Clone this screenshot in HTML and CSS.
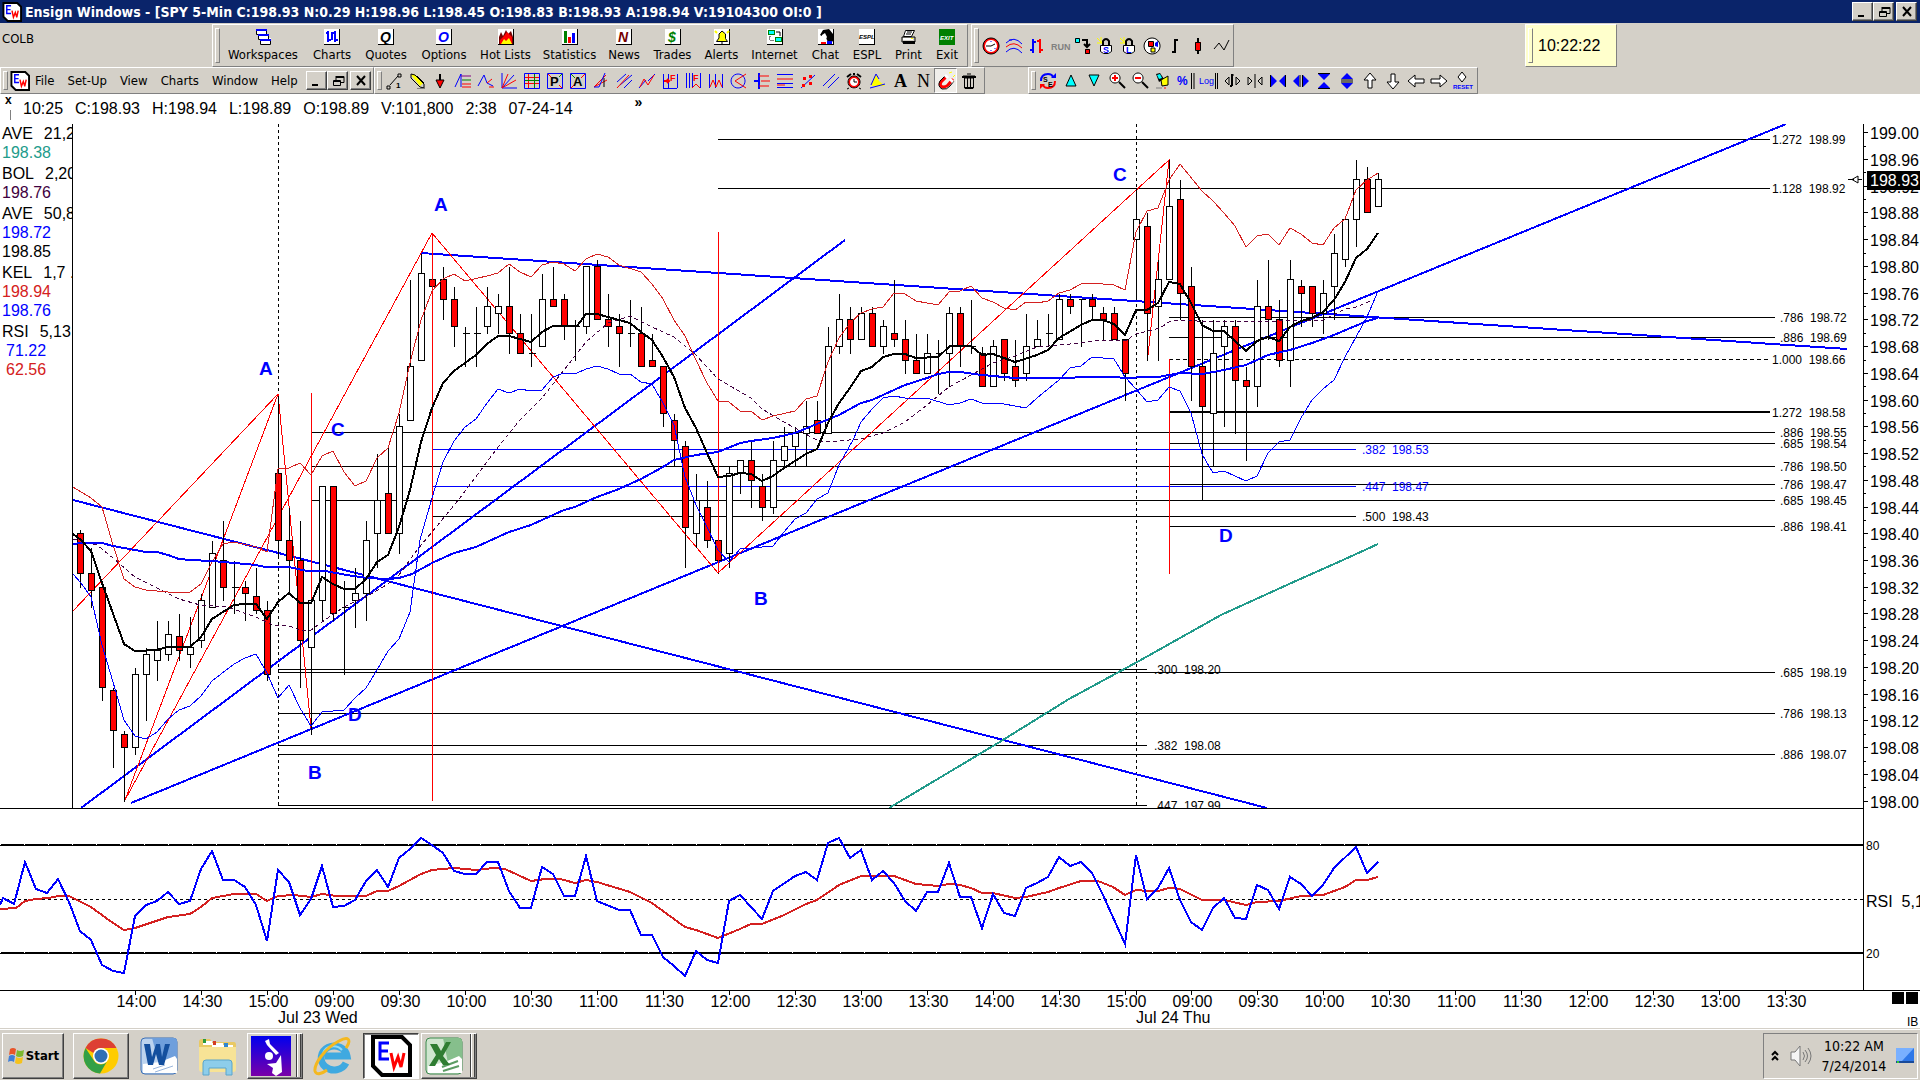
FILE: index.html
```html
<!DOCTYPE html>
<html lang="en">
<head>
<meta charset="utf-8">
<meta name="viewport" content="width=device-width, initial-scale=1">
<title>Ensign Windows</title>
<link rel="stylesheet" href="styles.css">
</head>
<body>
<header class="titlebar">
  <span class="ew ew-small" data-logo></span>
  <h1 class="title">Ensign Windows - [SPY 5-Min C:198.93 N:0.29 H:198.96 L:198.45 O:198.83 B:198.93 A:198.94 V:19104300 OI:0 ]</h1>
  <div class="winbtns">
    <button class="winbtn" aria-label="Minimize" data-icon="min"></button>
    <button class="winbtn" aria-label="Restore" data-icon="restore"></button>
    <button class="winbtn winbtn-close" aria-label="Close" data-icon="close"></button>
  </div>
</header>

<div class="rebar">
  <div class="bar-row bar-row-main">
    <span class="symbol">COLB</span>
    <nav class="band band-main" aria-label="Main toolbar">
      <button class="tool"><i data-icon="workspaces"></i>Workspaces</button>
      <button class="tool"><i data-icon="charts"></i>Charts</button>
      <button class="tool"><i data-icon="quotes"></i>Quotes</button>
      <button class="tool"><i data-icon="options"></i>Options</button>
      <button class="tool"><i data-icon="hot"></i>Hot Lists</button>
      <button class="tool"><i data-icon="stats"></i>Statistics</button>
      <button class="tool"><i data-icon="news"></i>News</button>
      <button class="tool"><i data-icon="trades"></i>Trades</button>
      <button class="tool"><i data-icon="alerts"></i>Alerts</button>
      <button class="tool"><i data-icon="internet"></i>Internet</button>
      <button class="tool"><i data-icon="chat"></i>Chat</button>
      <button class="tool"><i data-icon="espl"></i>ESPL</button>
      <button class="tool"><i data-icon="print"></i>Print</button>
      <button class="tool"><i data-icon="exit"></i>Exit</button>
    </nav>
    <div class="band band-icons band-studies" data-tools="clock curves bars run swap lockS lockL film ohlc candle line"></div>
    <div class="band band-clock">10:22:22</div>
  </div>
  <div class="bar-row bar-row-menu">
    <nav class="band band-menu" aria-label="Menu">
      <span class="ew ew-small" data-logo></span>
      <a class="menu" href="#">File</a>
      <a class="menu" href="#">Set-Up</a>
      <a class="menu" href="#">View</a>
      <a class="menu" href="#">Charts</a>
      <a class="menu" href="#">Window</a>
      <a class="menu" href="#">Help</a>
      <span class="winbtns mdi">
        <button class="winbtn" aria-label="Minimize chart" data-icon="min"></button>
        <button class="winbtn" aria-label="Restore chart" data-icon="restore"></button>
        <button class="winbtn winbtn-close" aria-label="Close chart" data-icon="close"></button>
      </span>
    </nav>
    <div class="band band-icons" data-tools="segment pencil arrow levels zig fan grid boxP boxA angle pitch zag gann gann2 cycle circle sidebars hlines dots parallel alarm mountain textA textN magnet trash"></div>
    <div class="band band-icons band-view" data-tools="refresh up down zoomin zoomout brush percent log widen narrow hin hout vin vout aup adown aleft aright reset"></div>
  </div>
</div>

<main>
  <div class="quote">
    <span class="quote-grip">x</span>
    <span>10:25</span><span>C:198.93</span><span>H:198.94</span><span>L:198.89</span><span>O:198.89</span><span>V:101,800</span><span>2:38</span><span>07-24-14</span>
    <span class="more">»</span>
  </div>
  <div class="price">
    <aside class="studies">
      <dl><dt><b>AVE</b><b>21,21</b></dt><dd class="teal">198.38</dd></dl>
      <dl><dt><b>BOL</b><b>2,20</b></dt><dd class="plum">198.76</dd></dl>
      <dl><dt><b>AVE</b><b>50,8</b></dt><dd class="blue">198.72</dd><dd>198.85</dd></dl>
      <dl><dt><b>KEL</b><b>1,7 .5</b></dt><dd class="red">198.94</dd><dd class="blue">198.76</dd></dl>
      <dl><dt><b>RSI</b><b>5,13</b></dt><dd class="blue in">71.22</dd><dd class="red in">62.56</dd></dl>
    </aside>
    <svg id="price" viewBox="72 124 1848 685" role="img" aria-label="SPY 5 minute price chart"></svg>
  </div>
  <svg id="rsi" viewBox="0 809 1920 219" role="img" aria-label="RSI study and time axis"></svg>
</main>

<footer class="taskbar">
  <button class="start">
    <svg viewBox="0 0 19 19" width="19" height="19"><path fill="#e8552a" d="M3 3q3-2 6 0l-1 6q-3-2-6 0z"/><path fill="#7cb82f" d="M10 4q3 2 7 0l-1 6q-4 2-7 0z"/><path fill="#3f7fd8" d="M2 10q3-2 6 0l-1 6q-3-2-6 0z"/><path fill="#f5c21c" d="M9 11q3 2 7 0l-1 6q-4 2-7 0z"/></svg>Start</button>
  <button class="task raised" aria-label="Chrome">
    <svg viewBox="0 0 36 36" width="36" height="36"><circle cx="18" cy="18" r="17.500" fill="#fc0"/><path fill="#dd4033" d="M2.500 10A17.500 17.500 0 0 1 33.500 10H18a8 8 0 0 0-7.500 5z"/><path fill="#33a046" d="M2.500 10A17.500 17.500 0 0 0 17 35.500L24.500 22.500a8 8 0 0 1-14 -.5z"/><circle cx="18" cy="18" r="8" fill="#fff"/><circle cx="18" cy="18" r="6.500" fill="#2f6fb5"/></svg>
  </button>
  <button class="task" aria-label="Word">
    <svg viewBox="0 0 38 38" width="38" height="38"><rect x="1" y="1" width="36" height="36" rx="4" fill="#bcd3ee" stroke="#3b6fb5"/><path fill="#6f9fdc" d="M12 1h22q3 0 3 3v20L20 30z"/><path fill="#fff" d="M3 36V27L20 25l15-6 2 3v14z"/><path stroke="#9ab6dc" d="M13 32l12-4M15 35l18-6"/><path fill="#134f9e" d="M4 7h6l2 13 4-13h4l2 13 3-13h5l-6 21h-5l-3-11-3 11H8z"/></svg>
  </button>
  <button class="task" aria-label="Explorer">
    <svg viewBox="0 0 40 40" width="40" height="40"><path fill="#e9c964" d="M2 6q0-3 3-3h8l2 3h22q2 0 2 3v24H2z"/><path fill="#fff" d="M6 5h9v4H6zM15 7h11v4H15zM26 9h10v3H26z"/><path fill="#2b9a3e" d="M6 3h3v4H6z"/><path fill="#d43c24" d="M16 5h3v4h-3z"/><path fill="#2f86d0" d="M27 7h4v4h-4z"/><path fill="#f7e396" d="M2 11h37v22q0 3-3 3H5q-3 0-3-3z"/><path fill="#8dcdea" stroke="#5aa5cc" d="M6 39V27q0-3 3-3h23q3 0 3 3v12h-6v-7H12v7z"/></svg>
  </button>
  <button class="task raised stack" aria-label="Paint Shop">
    <svg viewBox="0 0 40 40" width="40" height="40"><defs><linearGradient id="vio" x2="0" y2="1"><stop offset="0" stop-color="#00e"/><stop offset="1" stop-color="#7a00a8"/></linearGradient></defs><path fill="url(#vio)" d="M0 0h40v40H0z"/><g fill="#fff"><path d="M14 5l4-2 1 5 9 9-3 2-9-10z"/><circle cx="18" cy="20" r="4"/><path d="M16 28l9-1 5-8 1 17-6 4-4-3 1-5z"/></g></svg>
  </button>
  <button class="task" aria-label="Internet Explorer">
    <svg viewBox="0 0 40 40" width="40" height="40"><path fill="none" stroke="#3fa9e0" stroke-width="7" d="M33 27a13 12 0 1 1 1-7H12"/><path fill="none" stroke="#8fdcf8" stroke-width="2" d="M10 17a11 10 0 0 1 19-3"/><path fill="none" stroke="#f4b81f" stroke-width="3" d="M33 12c6-9 2-12-7-7C12 12 1 28 2 35c1 5 8 2 12-1"/></svg>
  </button>
  <button class="task pressed" aria-label="Ensign Windows"><span class="ew ew-big" data-logo></span></button>
  <button class="task raised stack" aria-label="Excel">
    <svg viewBox="0 0 38 38" width="38" height="38"><rect x="1" y="1" width="36" height="36" rx="4" fill="#cfe6cf" stroke="#3c8a4e"/><path fill="#86bf8c" d="M18 1h16q3 0 3 3v18l-14 4z"/><path fill="#fff" d="M3 36V29l17-4 14-6 3 3v14z"/><path stroke="#5b9c63" stroke-width="2" d="M17 30l16-6M18 34l16-5"/><path fill="#2f7d32" d="M5 7h7l4 7 5-9h5L18 19l7 9h-7l-4-6-4 7H4l7-11z"/></svg>
  </button>
  <div class="tray">
    <svg viewBox="0 0 10 12" width="10" height="12" fill="none" stroke="#000" stroke-width="2"><path d="M2 5l3-3 3 3M2 10l3-3 3 3"/></svg>
    <svg viewBox="0 0 22 22" width="22" height="22" fill="none" stroke="#777"><path fill="#f4f4f4" d="M1 7h4l5-6v20l-5-6H1z"/><path d="M13 7q3 4 0 8M15 5q5 6 0 12M18 3q6 8 0 16"/></svg>
    <div class="clock"><span>10:22 AM</span><span>7/24/2014</span></div>
    <svg viewBox="0 0 18 16" width="18" height="16"><path fill="#2f78e8" d="M0 0h18v13H0z"/><path fill="#79b0ff" d="M0 0h18L6 13H0z"/><path fill="#184a9a" d="M0 13h18v2H0z"/><path fill="#3c3" d="M1 13h2v2H1z"/></svg>
  </div>
</footer>
<script src="script.js"></script>
</body>
</html>
```

FILE: styles.css
```css
* { box-sizing: border-box; }
body {
  margin: 0;
  background: #fff;
  color: #000;
  font: 13px/16px "DejaVu Sans Condensed", "DejaVu Sans", sans-serif;
}
button { font: inherit; color: inherit; border: 0; padding: 0; background: none; }
svg { display: block; }
i { display: block; }

/* Title bar */
.titlebar {
  display: flex;
  align-items: center;
  height: 23px;
  padding: 0 3px 0 2px;
  gap: 3px;
  background: #0a246a;
  color: #fff;
}
.title { flex: 1; margin: 0; font-size: 14px; font-weight: 700; white-space: nowrap; overflow: hidden; }
.winbtns { display: flex; }
.winbtn {
  width: 21px;
  height: 19px;
  display: grid;
  place-items: center;
  background: #d4d0c8;
  border: 1px solid;
  border-color: #fff #404040 #404040 #fff;
  box-shadow: inset -1px -1px #808080;
}
.winbtn-close { margin-left: 2px; }
.ew { display: block; flex: none; }
.ew svg { width: 100%; height: 100%; }
.ew-small { width: 20px; height: 20px; }
.ew-big { width: 42px; height: 42px; }

/* Docked toolbars */
.rebar { background: #d4d0c8; padding-top: 1px; height: 71px; overflow: hidden; }
.bar-row { display: flex; }
.bar-row-main { height: 43px; }
.bar-row-menu { height: 27px; }
.symbol { width: 212px; padding: 7px 0 0 2px; }
.band {
  display: flex;
  align-items: center;
  border: 1px solid;
  border-color: #fff #808080 #808080 #fff;
}
.band::before {
  content: "";
  align-self: stretch;
  flex: none;
  width: 3px;
  margin: 3px 2px;
  border: 1px solid;
  border-color: #fff #808080 #808080 #fff;
}
.band-main {
  display: grid;
  grid-template-columns: 7px 86px 52px 56px 60px 63px 65px 44px 53px 45px 61px 41px 42px 41px 36px;
  width: 756px;
}
.tool { display: flex; flex-direction: column; align-items: center; gap: 1px; padding-bottom: 1px; white-space: nowrap; }
.tool svg, .icon svg { overflow: visible; }
.band-icons { padding-right: 4px; }
.band-icons::before { margin-right: 0; }
.icon { flex: none; width: 23px; height: 25px; display: grid; place-items: center; }
.icon-on { background: #f0eeea; border: 1px solid; border-color: #808080 #fff #fff #808080; }
.band-studies { margin-left: 3px; width: 263px; }
.band-clock { margin-left: 291px; width: 92px; background: #ffffcc; font: 16px/20px "Liberation Sans", sans-serif; gap: 3px; }
.band-menu { width: 374px; }
.band-menu .menu { color: inherit; text-decoration: none; margin-left: 13px; }
.band-menu .ew + .menu { margin-left: 5px; }
.mdi { margin-left: auto; padding-right: 2px; }
.band-view { margin-left: 43px; }

/* Quote line above the chart */
.quote {
  display: flex;
  gap: 12px;
  height: 30px;
  padding-left: 5px;
  font: 16px/30px "Liberation Sans", sans-serif;
  white-space: nowrap;
}
.quote-grip {
  width: 6px;
  height: 26px;
  border-right: 1px solid #808080;
  border-image: linear-gradient(#fff 60%, #808080 60%) 1;
  font-size: 12px;
  line-height: 12px;
  font-weight: 700;
}
.more { margin-left: 50px; font: 700 14px/16px "Liberation Sans", sans-serif; }

/* Price pane */
.price { display: grid; grid-template-columns: 72px 1fr; }
.studies { border-bottom: 1px solid #000; overflow: hidden; padding-left: 2px; font: 16px/19px "Liberation Sans", sans-serif; }
.studies dl, .studies dd { margin: 0; }
.studies dl { margin-bottom: 2px; }
.studies dt { display: flex; gap: 11px; white-space: nowrap; }
.studies b { font-weight: 400; }
.in { padding-left: 4px; }
.teal { color: #229b8b; }
.plum { color: #400040; }
.blue { color: #00f; }
.red { color: #d42020; }

#price, #rsi { width: 100%; height: auto; font: 16px "Liberation Sans", sans-serif; }
.lines { fill: none; stroke: #000; shape-rendering: crispEdges; }
.small { font-size: 12px; }
.wave { font-size: 19px; font-weight: 700; fill: #00f; }

/* Task bar */
.taskbar {
  display: flex;
  align-items: center;
  gap: 2px;
  height: 52px;
  padding: 2px 2px 0;
  background: #d4d0c8;
  border-top: 1px solid #d4d0c8;
  box-shadow: inset 0 1px #fff;
}
.start, .raised {
  border: 1px solid;
  border-color: #fff #404040 #404040 #fff;
  box-shadow: inset -1px -1px #808080;
}
.start { display: flex; align-items: center; justify-content: center; width: 62px; height: 46px; margin-right: 7px; font-weight: 700; }
.task { display: grid; place-items: center; width: 56px; height: 46px; }
.stack { background: linear-gradient(90deg, transparent 48px, #404040 48px 49px, #fff 49px 50px, #d4d0c8 50px 52px, #404040 52px 53px, #fff 53px 54px); place-items: center start; padding-left: 3px; }
.pressed { background: #fff; border: 1px solid; border-color: #404040 #fff #fff #404040; box-shadow: inset 1px 1px #808080; }
.tray {
  display: flex;
  align-items: center;
  justify-content: space-between;
  width: 155px;
  height: 46px;
  margin-left: auto;
  padding: 0 3px 0 6px;
  border: 1px solid;
  border-color: #808080 #fff #fff #808080;
}
.clock { display: grid; gap: 4px; text-align: center; font-size: 14px; }
```

FILE: script.js
```javascript
const COLORS = { k: '#000', b: '#00f', r: '#f00', g: '#008000', y: '#ff0', w: '#fff', c: '#0ff', p: '#800080', n: '#808080', m: '#700' };

/* Icon notation, 18x18 grid: lower-case key strokes a path, upper-case key fills it,
   "#key x y size text" writes bold text. Parts are separated by ";". */
const page = 'W:M1 1h15v15H1z;k:M16.5 1v16M1 16.500h16;';
const ICONS = {
  min: 'K:M4 12h6v2H4z', restore: 'k:M7 4.500h8v6h-3M7 5.500h8M7 4v4;k:M4.500 8.500h7v5h-7zM4 9.500h8', close: 'k2:M5 4l8 9M13 4l-8 9',
  workspaces: 'W:M2 1h11v6H2zM4 6h11v6H4zM6 10h11v7H6z;k:M2.500 1.500h10v5h-10zM4.500 6.500h10v5h-10zM6.500 11.500h10v5h-10z;b2:M2 2h11M4 7h11M6 12h11',
  charts: page + 'b2:M5 3v11M5 5H3M5 12h3M9 4v8M12 3v11M9 5h3M12 12h3', quotes: page + '#k 3 14 14 Q', options: page + '#b 3 14 14 O',
  hot: page + 'M:M2 16V9l2-5 2 4 3-6 2 4 3-3 2 6v7z;R:M3 16v-4l4-4 3-4 5 5v7z;Y:M4 16l3-5 2 2 3-3 3 6z',
  stats: page + 'G:M3 3h3v12H3z;R:M7 9h3v6H7z;B:M11 5h3v10h-3z', news: page + '#m 3 14 14 N', trades: page + '#g 4 14 14 $',
  alerts: page + 'Y:M4 13l2-3V6l3-3 3 3v4l2 3z;k:M3.500 13.500h11l-2-3V6L9 3 6 6v4zM9 14v2;y2:M2 3l2 2M16 3l-2 2',
  internet: page + 'G:M2 2h7v5H2zM9 9h7v5H9z;C:M3 3h5v3H3zM10 10h5v3h-5z;k:M10 4h4v4M4 8v4h4;W:M4 9h4v3H4z',
  chat: page + 'K:M3 7l3-5 6-1 4 5v7l-4 3-3-6z;W:M5 7l3-2 2 4-2 4-3-1z;R:M4 14h5v2H4z;B:M10 13h5v3h-5z',
  espl: page + '#k 1 11 6 ESPL', print: 'W:M5 2h9l-2 6H3z;k:M5.500 2.500h9l-3 6h-8zM2 9h13v5H2zM7 4h5M6 6h5;K:M3 13h12v3H3z;W:M3 10h10v2H3z;Y:M11 10h2v1h-2z',
  exit: 'G:M1 1h16v16H1z;#w 2 12 6 EXIT',
  clock: 'W:M9 1a8 8 0 1 0 .1 0z;r2:M9 2a7 7 0 1 0 .1 0z;k:M9 1a8 8 0 1 0 .1 0zM9 9l4-2M4 9h5;b:M9 4v1M9 13v1M13 11v1',
  curves: 'b:M1 6Q9-2 17 7;r:M1 10q8-7 16 1;b:M1 15q8-8 16 1M4 3h3', bars: 'b2:M5 2v14M2 13h3M5 5h3;r2:M12 2v14M9 4h3M12 13h3', run: '#n 0 13 9 RUN',
  swap: 'C:M1 1h5v5H1z;k:M1.500 1.500h4v4h-4z;k2:M8 3h5v6M10 7l3 3 3-3;R:M11 12h5v5h-5z;k:M11.500 12.500h4v4h-4z',
  lockS: 'k2:M6 8V4q3-4 6 0v4;W:M3 8h12v6l-3 3H6l-3-3z;k:M3.500 8.500h11v6l-3 2h-5l-3-2z;#b 6 16 9 S;y:M0 1l5 5M4 0v6M0 6h5',
  lockL: 'k2:M6 8V4q3-4 6 0v4;W:M3 8h12v6l-3 3H6l-3-3z;k:M3.500 8.500h11v6l-3 2h-5l-3-2z;#b 6 16 9 L;y:M0 1l5 5M4 0v6M0 6h5',
  film: 'W:M9 1a8 8 0 1 0 .1 0z;k:M9 1a8 8 0 1 0 .1 0z;R:M5 4h5v5H5z;B:M12 6l3-2v6l-3-1z;Y:M8 11h4v4H8z;k:M5.500 4.500h5v5h-5zM8 11h4v4H8z',
  ohlc: 'k2:M9 2v14M9 3h3M6 15h3', candle: 'R:M6 5h6v8H6z;k:M6.500 5.500h5v8h-5z;k2:M9 1v4M9 14v3', line: 'k:M2 12l5-6 5 7 5-10',
  segment: 'k:M2 14h3v3H2zM5 13L13 4M13 2h3v3h-3z;#k 11 16 8 1', pencil: 'Y:M3 3l3-1 9 9-3 3z;k:M3 6V2l4 1 9 9v4l-4-1z;k:M3 6l9 9M9 4l7 7;N:M9 16h8v1H9z', arrow: 'k2:M9 2v6;R:M5 8h8l-4 8z;k:M5 8h8l-4 8z',
  levels: 'b:M1 15L7 2M7 2v13;p:M7 4h10;g:M8 8h9;r:M8 12h9M8 15h9', zig: 'b:M1 14L7 3l3 8 6 3;r:M10 11l5-4M12 15h5', fan: 'b:M2 1v15h15M2 16L14 3;r:M2 16L8 2M2 16l14-8',
  grid: 'r:M5.500 2v14M2 5.500h14M2 11.500h14;g:M11.500 2v14M2 8.500h14;b:M1.500 1.500h15v15h-15z', boxP: 'b:M1.500 1.500h15v15h-15z;r:M2 2l3 3M16 16l-3-3;g:M16 2l-3 3;#k 4 14 13 P', boxA: 'b:M1.500 1.500h15v15h-15z;r:M2 16l4-4M16 2l-4 4;g:M2 2l4 4;#k 4 14 13 A',
  angle: 'r:M2 15L14 3M2 15l13-7;b:M13 1L7 15H2;k:M12 15V6', pitch: 'b:M2 10l9-8M5 13l12-10M9 16l8-8;r:M2 16L14 3', zag: 'b:M1 16l7-8M10 9l7-7;r:M2 15l4-8 4 6 6-10', gann: 'b:M2.500 2v14M7.500 2v14M16.500 2v14M2 16.500h14;r2:M3 9h5M6 7l2 2-2 2;#r 9 9 9 F',
  gann2: 'b:M2.500 1v15M5.500 1v15M8.500 1v15M16.500 1v15;r:M8 16l4-4 4 4;#r 9 9 9 F', cycle: 'b:M2.500 2v14M8.500 2v14M15.500 2v14;r:M3 15l3-7 3 7 3-7 3 7', circle: 'b:M8 2a7 7 0 1 0 .1 0z;r:M16 2L5 9l11 7', sidebars: 'b2:M6 1v16M1 9h5;r:M6 4h10M6 14h10M8 9h9',
  hlines: 'b:M1 2.500h16M1 11.500h16;r:M1 7h16;b:M1 15.500h16;r:M1 13h8', dots: 'b:M2 16L16 3;R:M4 5h3v3H4zM10 3h3v3h-3zM3 12h3v3H3zM10 10h3v3h-3z', parallel: 'b:M1 14L13 2M6 16L17 5',
  alarm: 'W:M9 5a6 6 0 1 0 .1 0z;r2:M9 5a5 5 0 1 0 .1 0z;k:M9 4a6 6 0 1 0 .1 0zM9 10V7M9 10h3M4 16l-2 1M14 16l2 1;k2:M2 5l4-3M16 5l-4-3M8 2h2', mountain: 'Y:M3 13L8 2l3 7 6 5H5z;b:M3 13L8 2l3 5M2 16l15-4', textA: '#s 3 15 18 A', textN: '#u 3 15 18 N',
  magnet: 'r3:M10 4l-6 6q-2 4 2 5 3 0 5-2l5-6;k:M8 4l-5 5q-3 5 2 8 5 1 8-3l4-5;W:M9 2l3 3-2 2-3-3zM14 6l3 3-2 2-3-3z;y:M12 1l3-1M16 5l2-2', trash: 'k:M3 4h12M7 2h4M4.500 6v10h9V6zM7.500 6v10M10.500 6v10;k2:M2 5h14M5 16h8',
  refresh: 'b2:M2 9q0-7 7-7 4 0 5 3;r2:M16 9q0 7-7 7-4 0-5-3;B:M12 6h5V1z;R:M6 12H1v5z;#k 4 10 7 S;#k 9 15 7 E', up: 'C:M9 3l5 11H4z;k:M9 3l5 11H4z', down: 'C:M4 3h10L9 14z;k:M4 3h10L9 14z',
  zoomin: 'W:M7 1a5 5 0 1 0 .1 0z;k:M7 1a5 5 0 1 0 .1 0z;r2:M7 3v6M4 6h6;k2:M11 10l6 6', zoomout: 'W:M7 1a5 5 0 1 0 .1 0z;k:M7 1a5 5 0 1 0 .1 0z;r2:M4 6h6;k2:M11 10l6 6', brush: 'K:M2 2l4-1 4 6-5 3z;C:M3 3l3-1 2 4-3 1z;Y:M7 8l7-4v9l-6 1z;k:M7 8l7-4v9l-6 1z;r:M11 15v2;n:M2 16h6',
  percent: '#b 0 13 12 %;k:M14.500 1v16M17 1v16', log: '#b -1 12 9 Log;k:M15.500 1v16M17.500 1v16', widen: 'k2:M9 2v12M9 14H7;k:M11 3h-2M6 5L2 9l4 4zM13 5l4 4-4 4z', narrow: 'k:M9 2v14M2 5l4 4-4 4zM16 5l-4 4 4 4z',
  hin: 'B:M2 3l6 6-6 6zM16 3l-6 6 6 6z;k:M1.500 3v12M16.500 3v12', hout: 'B:M7 3L1 9l6 6zM11 3l6 6-6 6z;k:M8 3v12M10.500 3v12', vin: 'B:M3 2h12L9 8zM3 16h12l-6-6z;k:M3 1.500h12M3 16.500h12', vout: 'B:M3 7h12L9 1zM3 11h12l-6 6z;k:M3 8h12M3 10h12',
  aup: 'W:M9 1l6 7h-4v8H7V8H3z;k:M9 1l6 7h-4v8H7V8H3z', adown: 'W:M9 17l6-7h-4V2H7v8H3z;k:M9 17l6-7h-4V2H7v8H3z', aleft: 'W:M1 9l7-6v4h9v4H8v4z;k:M1 9l7-6v4h9v4H8v4z', aright: 'W:M17 9l-7-6v4H1v4h9v4z;k:M17 9l-7-6v4H1v4h9v4z',
  reset: 'W:M9 0l4 5-4 5-4-5z;k:M9 0l4 5-4 5-4-5z;#b 0 17 6 RESET'
};

function iconSvg(name) {
  const parts = ICONS[name].split(';').filter(Boolean).map(part => {
    if (part[0] === '#') {
      const [key, x, y, size, text] = part.slice(1).split(' ');
      const serif = key === 's' || key === 'u';
      return `<text x="${x}" y="${y}" font-size="${size}" font-weight="${key === 'u' || name === 'log' ? 400 : 700}" font-family="${serif ? 'Liberation Serif, serif' : 'Liberation Sans, sans-serif'}" fill="${COLORS[key] || '#000'}">${text}</text>`;
    }
    const [key, d] = part.split(':');
    const letter = key[0], color = COLORS[letter.toLowerCase()];
    return letter === letter.toUpperCase()
      ? `<path fill="${color}" d="${d}"/>`
      : `<path fill="none" stroke="${color}" stroke-width="${key[1] || 1}" d="${d}"/>`;
  });
  return `<svg viewBox="0 0 18 18" width="18" height="18">${parts.join('')}</svg>`;
}

document.querySelectorAll('[data-icon]').forEach(el => { el.innerHTML = iconSvg(el.dataset.icon); });
document.querySelectorAll('[data-tools]').forEach(el => {
  el.innerHTML = el.dataset.tools.split(' ').map(name =>
    `<button class="icon${name === 'magnet' ? ' icon-on' : ''}" aria-label="${name}">${iconSvg(name)}</button>`).join('');
});
document.querySelectorAll('[data-logo]').forEach(el => {
  el.innerHTML = '<svg viewBox="0 0 42 42"><path fill="#fff" stroke="#000" stroke-width="4" d="M3 2h29l8 8v30H12l-9-9z"/><path fill="none" stroke="#00f" stroke-width="3" d="M19 8H10v16h9M10 16h8"/><path fill="none" stroke="#f00" stroke-width="3" d="M21 18l3 14 4-10 3 10 3-14"/></svg>';
});

/* ---- Chart ---- */
const X0 = 80.5, STEP = 11;
const yOf = cents => Math.round(800.6 - cents * 6.683) + 0.5;

/* One candle per entry: direction, high, body top, body bottom, low, in cents above 198 */
const CANDLES = `r 40.6 40 34 32|r 38 34 31.500 29|r 32.300 32 17 15|r 17 16.500 10.500 5|r 10.600 10 8 0|w 20 19 8 7|w 23 22 19 12|w 27 22.600 21 18|w 27 25 22 21|r 28 24.600 22.500 21|w 27.600 23 22 20|w 31 30 24 23|w 39 37 29 29|r 42 36 32 30|w 36 32 32 28|r 33 32 31 27|r 35 30.600 28.500 28|r 30 28.500 19 18|r 60.700 49 39 36.300|r 44 39 36 31|r 42 36 24 17|w 30 30 23 10|w 47 47 30 27|r 47 47 28 27|w 33 29 29 19|w 35 31 30 26|w 42 39 31 27|w 52 45 40 35|r 53 46 40 40|w 58 56 40 37|w 78 65 57 57|w 82 79 66 66|r 85 78 77 77|r 80 78 75 72|r 77 75 71 68|w 71 70 70 65|w 74 70 70 65|w 77 74 71 70|w 76 74 73 70|r 80 74 70 67|r 73 70 67 67|w 73 67 67 65|w 79 75 68 68|r 80 75 74 74|r 76 75 71 69|w 72 71 71 66|w 80 80 71 70|r 81 80 72 72|r 76 72 71 68|r 73 71 70 65|w 75 70 70 68|r 74 70 65 65|r 70 66 65 65|r 65 65 58 56|r 58 57 54 50|r 54 53 41 35|w 49 45 40 38|r 48 44 39 38|r 50 39 36 34|w 50 49 37 35|w 51 51 49 46|r 54 51 48 44|r 49 47 44 42|w 54 51 44 43|w 56 53 51 50|w 56 55 53 50|w 60 56 55 50|r 60 57 55 55|w 71 68 55 55|w 76 72 68 67|r 74 72 69 67|w 74 73 69 69|r 74 73 68 68|w 72 71 68 67|r 78 70 69 68|r 72 69 66 64|r 70 66 64 64|w 70 67 64 64|w 69 67 67 61|w 74 73 67 62|r 74 73 68 65|w 75 68 68 67|r 68 67 62 62|w 69 68 62 62|r 69 69 64 63|r 69 65 63 62|w 73 68 64 63|w 72 69 68 68|w 73 70 70 68|w 76 75 69 69|r 76 75 74 73|w 75 75 75 68|r 76 75 74 72|r 74 73 72 69|r 74 73 69 69|r 69 69 64 60|w 91.600 87 84 75|r 88 86 73 66|w 81 78 74 66|w 96 89 78 78|r 93 90 76 72|r 80 77 65 60|r 72 65 59 45|w 72 67 58 50|w 72 71 68 56|r 72 71 63 55|r 65 63 62 51|w 78 74 62 59|r 81 74 72 69|r 75 72 66 65|w 81 78 66 62|r 78 77 76 71|r 77 77 73 71|w 78 76 73 70|w 85 82 77 72|w 87 87 81 80|w 96 93 87 83|r 95 93 88 88|w 94 93 89 89`.split('|').map(row => row.split(' '));

const AVE8 = '73,534 81,540 91,551 102,583 124,644 135,651 157,650 167,647 190,647 201,637 212,619 234,605 245,604 256,604 267,619 278,602 289,593 300,603 311,603 322,577 333,584 344,589 355,589 366,579 377,562 388,555 399,527 410,490 421,442 432,408 443,383 454,371 476,355 487,344 498,336 509,336 520,339 531,342 542,332 553,326 577,326 586,314 597,314 608,317 630,323 641,332 652,340 663,357 674,377 685,408 696,428 707,453 718,477 729,476 740,473 751,474 762,481 773,476 784,468 806,454 817,449 828,423 839,403 850,388 861,371 872,367 883,357 894,354 905,354 916,358 938,357 950,346 971,346 982,355 993,354 1004,358 1015,362 1037,355 1048,350 1059,338 1081,325 1092,320 1103,320 1114,324 1125,335 1136,310 1147,310 1158,303 1169,282 1180,284 1191,303 1202,325 1213,331 1224,331 1235,341 1246,351 1257,341 1268,337 1279,341 1290,327 1301,321 1312,318 1323,312 1334,300 1345,282 1356,258 1367,249 1378,233';
const AVE50 = '73,544 81,543 102,543 113,546 146,552 157,552 168,555 179,559 190,560 212,561 256,565 265,567 289,567 307,571 325,571 347,575 367,578 388,579 399,578 412,574 432,563 454,553 476,547 509,532 531,525 564,510 575,507 597,497 608,493 619,489 641,479 663,467 674,460 696,455 718,452 740,443 751,441 773,438 795,433 839,415 850,409 861,403 872,400 905,385 927,378 938,374 949,372 960,372 982,375 1015,378 1070,378 1081,377 1114,377 1125,378 1147,377 1158,377 1180,373 1202,374 1224,370 1246,365 1268,355 1290,350 1312,343 1334,335 1367,321 1378,318';
const KEL_TOP = '73,487 91,498 102,507 113,545 124,579 135,587 146,590 168,592 190,592 201,584 212,562 223,544 234,542 256,547 267,552 278,469 289,468 300,463 311,475 322,456 333,451 344,472 355,486 366,481 377,458 388,448 399,413 410,363 421,320 432,291 443,279 454,274 465,281 487,276 498,273 509,264 520,272 531,277 542,265 553,262 564,264 575,271 586,259 597,254 608,257 619,265 641,272 652,284 663,299 674,320 685,336 696,360 707,383 718,401 729,402 740,411 751,411 762,420 773,416 795,411 806,399 817,396 828,362 839,338 850,323 861,313 872,309 883,307 894,293 905,294 916,301 938,305 949,292 960,291 971,286 982,298 993,302 1004,308 1015,310 1026,302 1037,303 1048,301 1059,293 1070,290 1081,284 1092,283 1114,285 1125,290 1136,232 1147,211 1158,208 1169,180 1180,164 1202,191 1213,201 1224,213 1235,226 1246,247 1257,236 1268,234 1279,245 1290,228 1301,234 1312,243 1323,245 1334,228 1345,219 1356,190 1367,180 1378,173';
const KEL_LOW = '73,574 81,583 91,597 102,645 113,682 124,720 135,736 146,739 157,732 168,719 179,710 190,706 201,696 212,681 234,664 245,658 256,654 267,673 278,698 289,685 300,708 311,726 322,712 344,710 355,698 366,688 377,670 388,651 399,639 410,612 420,540 432,498 443,462 454,441 465,427 476,419 487,403 498,389 509,393 520,389 531,391 542,390 553,377 564,373 575,374 586,369 597,366 608,369 619,374 630,374 641,382 652,384 663,403 674,425 685,477 696,505 707,527 718,550 729,562 740,549 751,548 773,546 784,532 795,519 806,513 817,499 828,493 839,465 853,440 861,422 872,409 883,398 894,396 905,398 927,398 949,405 960,403 971,399 982,403 1004,404 1026,408 1037,398 1059,380 1070,368 1081,366 1092,357 1114,359 1125,377 1136,389 1147,402 1158,400 1169,387 1180,391 1191,413 1202,454 1213,473 1224,471 1246,481 1257,476 1268,453 1279,442 1290,440 1301,418 1312,400 1323,389 1334,380 1345,357 1356,337 1367,317 1378,291';
const BOL = '73,539 97,545 113,558 135,577 157,588 179,599 200,605 227,607 256,617 273,625 289,626 300,630 311,630 322,622 344,607 373,593 388,584 399,575 417,550 432,532 460,498 478,474 498,447 520,420 542,398 564,370 586,342 608,323 630,316 652,327 674,337 696,355 718,379 751,398 762,409 784,422 795,428 820,442 839,441 860,439 883,433 905,422 927,405 949,387 971,375 993,363 1015,356 1037,347 1070,344 1103,340 1125,341 1136,334 1160,328 1169,322 1180,320 1213,322 1279,321 1323,320 1345,309 1356,307 1373,300';
const AVE200 = '889,808 998,743 1069,699 1139,661 1221,615 1298,580 1343,560 1378,544';
const RSI = '0,905 3,898 14,904 25,862 36,889 47,893 58,879 69,902 80,931 91,940 102,965 113,971 124,973 135,916 146,905 157,901 168,892 179,904 190,901 201,869 212,851 223,880 234,880 245,887 256,905 267,941 278,870 289,882 300,915 311,899 322,866 333,907 344,906 355,900 366,881 377,870 388,887 399,858 410,849 421,838 432,845 443,853 454,871 465,874 476,874 487,862 498,862 509,891 520,908 531,908 542,867 553,874 564,896 575,896 586,856 597,901 619,910 630,910 641,935 652,935 663,957 674,966 685,976 696,951 707,960 718,963 729,901 740,895 762,919 773,891 795,876 806,872 817,880 828,843 839,838 850,858 861,850 872,880 883,871 894,883 905,901 916,911 927,892 938,892 949,863 960,897 971,897 982,928 993,894 1004,913 1015,916 1026,888 1037,883 1048,877 1059,857 1070,866 1081,862 1092,873 1103,895 1125,944 1136,855 1147,899 1158,888 1169,868 1180,900 1191,922 1202,930 1213,908 1224,898 1235,918 1246,919 1257,885 1268,890 1279,909 1290,877 1301,884 1312,896 1323,885 1334,868 1356,847 1367,873 1378,862';
const RSI_AVE = '0,909 16,908 25,901 36,899 49,898 58,896 69,896 91,907 113,923 124,930 135,928 168,917 190,914 201,907 212,898 234,894 256,894 267,901 278,896 294,895 311,897 322,894 337,896 366,896 377,891 388,891 399,886 421,874 432,870 454,868 476,870 493,868 505,869 531,881 545,879 560,879 575,883 586,880 597,882 630,892 652,903 685,927 696,930 718,938 740,929 751,924 762,924 784,915 806,904 817,900 839,885 861,876 894,876 916,884 938,886 949,884 960,885 971,888 982,893 993,893 1015,898 1026,897 1048,892 1059,888 1081,881 1098,881 1113,887 1125,895 1136,890 1147,891 1158,891 1169,888 1180,889 1202,900 1224,900 1246,905 1257,902 1279,901 1301,896 1323,895 1345,887 1356,880 1367,880 1378,877';

/* Fibonacci levels: y, start, end, label, extra attributes */
const LEVELS = [
  [139, 718, 1770, '1.272 198.99'], [188, 718, 1770, '1.128 198.92'], [317, 1169, 1775, '.786 198.72'], [337, 1169, 1775, '.886 198.69'],
  [359, 1169, 1768, '1.000 198.66', 'stroke-dasharray="4 3"'], [412, 1169, 1770, '1.272 198.58', 'stroke-width="2"'],
  [432, 311, 1775, '.886 198.55'], [443, 1169, 1775, '.685 198.54'], [466, 311, 1775, '.786 198.50'], [484, 1169, 1775, '.786 198.47'],
  [500, 311, 1775, '.685 198.45'], [526, 1169, 1775, '.886 198.41'], [449, 432, 1356, '.382 198.53', 'stroke="#00f"'], [486, 432, 1356, '.447 198.47', 'stroke="#00f"'],
  [516, 432, 1356, '.500 198.43'], [669, 278, 1147, '.300 198.20'], [672, 278, 1775, '.685 198.19'], [713, 278, 1775, '.786 198.13'],
  [745, 278, 1147, '.382 198.08'], [754, 278, 1775, '.886 198.07'], [805, 278, 1147, '.447 197.99']
];
const WAVES = [['A', 259, 375], ['C', 331, 436], ['B', 308, 779], ['D', 348, 721], ['A', 434, 211], ['B', 754, 605], ['C', 1113, 181], ['D', 1219, 542]];

const path = (d, attrs = '') => `<path d="${d}" ${attrs}/>`;
const poly = (points, attrs) => `<polyline points="${points}" ${attrs}/>`;
const text = (x, y, value, attrs = '') => `<text x="${x}" y="${y}" ${attrs}>${value}</text>`;

let lines = '', labels = '';
LEVELS.forEach(([y, x1, x2, label, attrs = '']) => {
  const width = attrs.includes('width');
  lines += path(`M${x1} ${width ? y : y + 0.5}H${x2}`, attrs);
  const x = x2 === 1147 ? 1154 : x2 === 1356 ? 1362 : label[0] === '1' ? 1772 : 1780;
  labels += text(x, y + 5, label.replace(' ', '&#160; '), `class="small"${attrs.includes('#00f') ? ' fill="#00f"' : ''}`);
});
lines += path('M278.500 124V808M1136.500 124V808', 'stroke-dasharray="3 3"');
lines += path('M73 500L1267 808M81 808L845 240M131 803L1786 124M421 253L1847 349', 'stroke="#00f" stroke-width="2"');
lines += path('M73 611L278 394L125 800L432 233L718 573L1169 160L1148 355M278 394L311 728', 'stroke="#f00"');

CANDLES.forEach(([kind, high, top, bottom, low], i) => {
  const x = X0 + STEP * i, h = yOf(high), t = yOf(top), b = yOf(bottom), l = yOf(low);
  lines += t === b
    ? path(`M${x} ${h}V${l}M${x - 3} ${t}h7`)
    : path(`M${x} ${h}V${t}M${x} ${b}V${l}`) + path(`M${x - 3} ${t}h6V${b}h-6z`, `fill="${kind === 'r' ? '#f00' : '#fff'}"`);
});
lines += path('M311.500 393V603M432.500 233V801M718.500 232V573M1169.500 359V574', 'stroke="#f00"');
lines += poly(BOL, 'stroke="#400040" stroke-dasharray="4 3"') + poly(KEL_TOP, 'stroke="#d42020"') + poly(KEL_LOW, 'stroke="#00f"');
lines += poly(AVE200, 'stroke="#229b8b" stroke-width="2"') + poly(AVE50, 'stroke="#00f" stroke-width="2"') + poly(AVE8, 'stroke-width="2"');

let ticks = 'M72.500 124V808M72 808.500H1864M1863.500 124V808';
for (let c = 100; c >= 0; c -= 2) {
  ticks += `M1864 ${yOf(c)}h${c % 4 ? 2 : 4}`;
  if (c % 4 === 0) labels += text(1870, yOf(c) + 6, (198 + c / 100).toFixed(2));
}
WAVES.forEach(([name, x, y]) => { labels += text(x, y, name, 'class="wave"'); });
document.getElementById('price').innerHTML =
  `<g class="lines">${lines}${path(ticks)}</g>${labels}<path d="M1867 171h53v19h-53z"/>${text(1870, 186, '198.93', 'fill="#fff"')}<path fill="none" stroke="#000" d="M1862 179.500h-4M1854 179.500h-6M1858 176v7l-6-3.500z"/>`;

/* RSI pane and time axis */
const TIMES = ['14:00', '14:30', '15:00', '09:00', '09:30', '10:00', '10:30', '11:00', '11:30', '12:00', '12:30', '13:00', '13:30'];
let axis = '', times = '';
[...TIMES, ...TIMES].forEach((time, k) => {
  const x = 135.5 + 66 * k;
  axis += `M${x} 990v5`;
  times += text(x + 1, 1007, time, 'text-anchor="middle"');
});
document.getElementById('rsi').innerHTML = `<g class="lines">${path('M0 899.500H1863', 'stroke-dasharray="3 3"')}${path('M0 845H1863M0 953H1863', 'stroke-width="2"')}${path('M0 844.500H1378M0 952.500H1378', 'stroke="#fff" stroke-dasharray="1 23"')}${path('M0 990.500H1920M1863.500 809V990M278.500 990v5M1136.500 990v5' + axis)}${poly(RSI_AVE, 'stroke="#d42020" stroke-width="2"')}${poly(RSI, 'stroke="#00f" stroke-width="2"')}</g>`
  + times + text(278, 1023, 'Jul 23 Wed') + text(1136, 1023, 'Jul 24 Thu') + text(1866, 850, '80', 'class="small"') + text(1866, 958, '20', 'class="small"')
  + text(1866, 907, 'RSI&#160; 5,13') + text(1907, 1026, 'IB', 'class="small"') + '<path d="M1892 992h12v12h-12zM1906 992h12v12h-12z"/>';
```
